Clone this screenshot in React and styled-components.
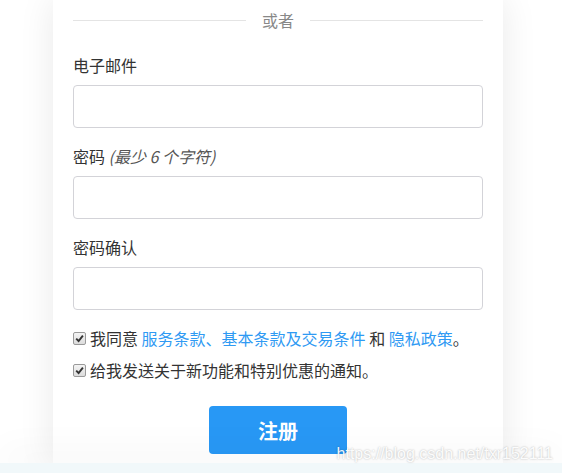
import React from 'react';
import styled, { createGlobalStyle } from 'styled-components';

const GlobalStyle = createGlobalStyle`
  html, body {
    margin: 0;
    padding: 0;
    background: #fff;
    overflow: hidden;
  }
  * {
    box-sizing: border-box;
  }
`;

const Check = ({ label }) => (
  <CheckRow>
    <Box>
      <svg width="9" height="9" viewBox="0 0 9 9">
        <path d="M1.2 4.6 L3.6 7 L7.9 1.6" fill="none" stroke="#333" strokeWidth="1.9" />
      </svg>
    </Box>
    <CheckText>{label}</CheckText>
  </CheckRow>
);

const App = () => (
  <Page>
    <GlobalStyle />
    <Main>
      <Card>
        <Divider>
          <Line />
          <DividerText>或者</DividerText>
          <Line />
        </Divider>
        <Form>
          <Group>
            <Label>电子邮件</Label>
            <Input type="email" />
          </Group>
          <Group>
            <Label>
              密码 <Hint>(最少 6 个字符)</Hint>
            </Label>
            <Input type="password" />
          </Group>
          <Group>
            <Label>密码确认</Label>
            <Input type="password" />
          </Group>
          <Checks>
            <Check
              label={
                <>
                  我同意 <Link>服务条款、基本条款及交易条件</Link> 和 <Link>隐私政策</Link>。
                </>
              }
            />
            <Check label="给我发送关于新功能和特别优惠的通知。" />
          </Checks>
          <Submit>注册</Submit>
        </Form>
      </Card>
    </Main>
    <Footer />
    <Watermark>https://blog.csdn.net/txr152111</Watermark>
  </Page>
);

export default App;

const Page = styled.div`
  position: relative;
  width: 562px;
  height: 473px;
  display: flex;
  flex-direction: column;
  font-family: "Noto Sans CJK SC", "Liberation Sans", sans-serif;
  color: #333;
`;

const Main = styled.div`
  flex: 1;
  display: flex;
  padding-left: 53px;
  overflow: hidden;
`;

const Card = styled.div`
  width: 450px;
  background: #fff;
  padding: 9px 20px 0;
  box-shadow: 0 0 34px rgba(0, 0, 0, 0.09);
`;

const Divider = styled.div`
  display: flex;
  align-items: center;
  gap: 16px;
  height: 22px;
`;

const Line = styled.div`
  flex: 1;
  height: 1px;
  background: #e4e4e4;
`;

const DividerText = styled.span`
  font-size: 16px;
  line-height: 22px;
  color: #888;
`;

const Form = styled.form`
  margin-top: 23px;
  display: flex;
  flex-direction: column;
`;

const Group = styled.div`
  margin-bottom: 17px;
`;

const Label = styled.div`
  height: 22px;
  font-size: 16px;
  line-height: 22px;
  color: #333;
  margin-bottom: 9px;
`;

const Hint = styled.em`
  font-style: italic;
  color: #555;
`;

const Input = styled.input`
  display: block;
  width: 100%;
  height: 43px;
  border: 1px solid #d3d3d8;
  border-radius: 4px;
  background: #fff;
  outline: none;
`;

const Checks = styled.div`
  display: flex;
  flex-direction: column;
  gap: 10px;
`;

const CheckRow = styled.label`
  display: flex;
  align-items: center;
  gap: 4px;
  height: 22px;
  font-size: 16px;
  line-height: 22px;
`;

const Box = styled.span`
  width: 13px;
  height: 13px;
  flex: none;
  display: flex;
  align-items: center;
  justify-content: center;
  border: 1px solid #9a9a9a;
  border-radius: 2px;
  background: linear-gradient(#f4f4f4, #dcdcdc);
`;

const CheckText = styled.span`
  color: #333;
`;

const Link = styled.a`
  color: #2f9af3;
  text-decoration: none;
`;

const Submit = styled.button`
  align-self: center;
  margin-top: 25px;
  width: 138px;
  height: 48px;
  border: none;
  border-radius: 4px;
  background: #2898f5;
  color: #fff;
  font-family: inherit;
  font-size: 20px;
  font-weight: 700;
`;

const Footer = styled.div`
  position: relative;
  z-index: 1;
  height: 10px;
  flex: none;
  background: #f1f8fa;
  box-shadow: 0 -8px 36px rgba(0, 0, 0, 0.08);
`;

const Watermark = styled.div`
  position: absolute;
  right: 9px;
  bottom: 10px;
  z-index: 2;
  font-family: "Liberation Sans", Arial, sans-serif;
  font-size: 16px;
  line-height: 18px;
  color: rgba(255, 255, 255, 0.95);
  text-shadow: 0 0 2px rgba(0, 0, 0, 0.3);
`;
